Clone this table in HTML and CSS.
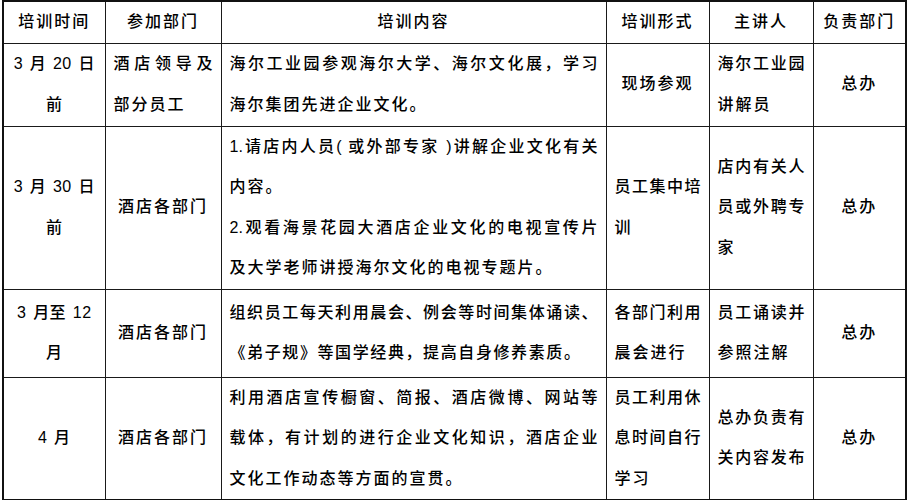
FILE: index.html
```html
<!DOCTYPE html>
<html lang="zh-CN">
<head>
<meta charset="utf-8">
<title>培训计划</title>
<link rel="stylesheet" href="styles.css">
</head>
<body>
<table class="plan">
  <colgroup>
    <col class="w1"><col class="w2"><col class="w3"><col class="w4"><col class="w5"><col class="w6">
  </colgroup>
  <tr class="head">
    <th>培训时间</th>
    <th>参加部门</th>
    <th>培训内容</th>
    <th>培训形式</th>
    <th>主讲人</th>
    <th>负责部门</th>
  </tr>
  <tr class="r1">
    <td class="date"><span class="ln">3 月 20 日</span><span class="ln">前</span></td>
    <td class="left"><span class="ln j">酒店领导及</span><span class="ln">部分员工</span></td>
    <td class="left"><span class="ln j">海尔工业园参观海尔大学、海尔文化展，学习</span><span class="ln">海尔集团先进企业文化。</span></td>
    <td class="mid">现场参观</td>
    <td class="left"><span class="ln j">海尔工业园</span><span class="ln">讲解员</span></td>
    <td class="mid">总办</td>
  </tr>
  <tr class="r2">
    <td class="date"><span class="ln">3 月 30 日</span><span class="ln">前</span></td>
    <td class="mid">酒店各部门</td>
    <td class="left"><span class="ln j">1.请店内人员( 或外部专家 )讲解企业文化有关</span><span class="ln">内容。</span><span class="ln j">2.观看海景花园大酒店企业文化的电视宣传片</span><span class="ln">及大学老师讲授海尔文化的电视专题片。</span></td>
    <td class="left"><span class="ln j">员工集中培</span><span class="ln">训</span></td>
    <td class="left"><span class="ln j">店内有关人</span><span class="ln j">员或外聘专</span><span class="ln">家</span></td>
    <td class="mid">总办</td>
  </tr>
  <tr class="r3">
    <td class="date"><span class="ln">3 月至 12</span><span class="ln">月</span></td>
    <td class="mid">酒店各部门</td>
    <td class="left"><span class="ln j">组织员工每天利用晨会、例会等时间集体诵读、</span><span class="ln tight">《弟子规》等国学经典，提高自身修养素质。</span></td>
    <td class="left"><span class="ln j">各部门利用</span><span class="ln">晨会进行</span></td>
    <td class="left"><span class="ln j">员工诵读并</span><span class="ln">参照注解</span></td>
    <td class="mid">总办</td>
  </tr>
  <tr class="r4">
    <td class="date">4 月</td>
    <td class="mid">酒店各部门</td>
    <td class="left"><span class="ln j">利用酒店宣传橱窗、简报、酒店微博、网站等</span><span class="ln j">载体，有计划的进行企业文化知识，酒店企业</span><span class="ln">文化工作动态等方面的宣贯。</span></td>
    <td class="left"><span class="ln j">员工利用休</span><span class="ln j">息时间自行</span><span class="ln">学习</span></td>
    <td class="left"><span class="ln j">总办负责有</span><span class="ln j">关内容发布</span></td>
    <td class="mid">总办</td>
  </tr>
</table>
</body>
</html>
```

FILE: styles.css
```css
html, body {
  margin: 0;
  padding: 0;
  background: #ffffff;
}

body {
  font-family: "Liberation Sans", "Noto Sans CJK SC", sans-serif;
  font-size: 16px;
  color: #000000;
}

.plan {
  margin: 0 0 0 2px;
  width: 905px;
  table-layout: fixed;
  border-collapse: collapse;
  border: 2px solid #111111;
}

.w1 { width: 102px; }
.w2 { width: 116px; }
.w3 { width: 385px; }
.w4 { width: 103px; }
.w5 { width: 104px; }
.w6 { width: 93px; }

.plan th,
.plan td {
  border: 1px solid #1a1a1a;
  padding: 0 8px;
  line-height: 40.5px;
  vertical-align: middle;
  letter-spacing: 2px;
  font-weight: 500;
  white-space: nowrap;
}

.plan th {
  text-align: center;
}

.head { height: 41px; }
.r1 { height: 83px; }
.r2 { height: 162px; }
.r3 { height: 88px; }
.r4 { height: 123px; }

.plan td.date {
  text-align: center;
  letter-spacing: 0.4px;
  word-spacing: 2px;
}

.mid {
  text-align: center;
}

.left {
  text-align: left;
}

.ln {
  display: block;
  white-space: nowrap;
}

.j {
  text-align: justify;
  text-align-last: justify;
  letter-spacing: 0;
}

.tight {
  letter-spacing: 1.6px;
}
```
